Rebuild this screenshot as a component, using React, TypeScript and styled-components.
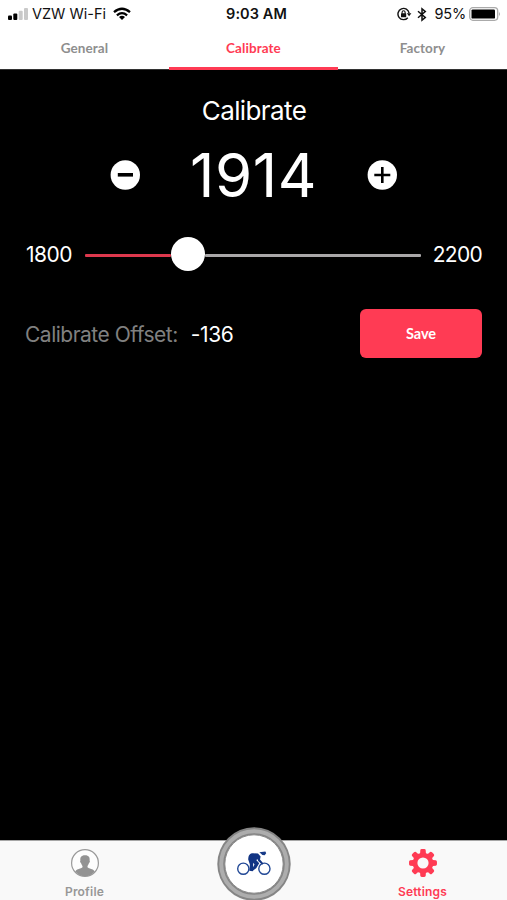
import React from "react";
import styled, { createGlobalStyle } from "styled-components";

const RED = "#ff3b54";

const GlobalStyle = createGlobalStyle`
  * { box-sizing: border-box; }
  html, body { margin: 0; padding: 0; background: #000; }
  body { font-family: Inter, "Liberation Sans", sans-serif; overflow: hidden; }
  button { border: 0; padding: 0; margin: 0; background: none; font: inherit; }
`;

const Screen = styled.div`
  width: 507px;
  height: 900px;
  display: flex;
  flex-direction: column;
  background: #000;
  overflow: hidden;
`;

const StatusBar = styled.header`
  height: 28px;
  flex: none;
  display: grid;
  grid-template-columns: 1fr auto 1fr;
  align-items: center;
  padding: 0 6px 0 8px;
  background: #fff;
  color: #111;
  font-size: 15px;
  line-height: 28px;
`;

const StatusGroup = styled.div<{ $end?: boolean }>`
  display: flex;
  align-items: center;
  justify-content: ${(p) => (p.$end ? "flex-end" : "flex-start")};
  svg { flex: none; display: block; }
`;

const Carrier = styled.span`
  margin: 0 7px 0 4px;
  font-size: 14.5px;
  white-space: nowrap;
`;

const Clock = styled.span`
  font-weight: 600;
  font-size: 14.5px;
  letter-spacing: 0.1px;
  margin-left: 4px;
`;

const Percent = styled.span`
  margin: 0 3px 0 8px;
  font-size: 14.5px;
  letter-spacing: -0.2px;
`;

const Indicators = styled.div`
  display: flex;
  align-items: center;
  gap: 5px;
`;

const Tabs = styled.nav`
  height: 42px;
  flex: none;
  display: grid;
  grid-template-columns: repeat(3, 1fr);
  background: #fff;
  border-bottom: 1px solid #333;
`;

const Tab = styled.button<{ $active?: boolean }>`
  padding-top: 1px;
  font-family: Lato, sans-serif;
  font-weight: 700;
  font-size: 13.5px;
  letter-spacing: 0.08px;
  line-height: 38px;
  color: ${(p) => (p.$active ? RED : "#8e8e8e")};
  border-bottom: 3px solid ${(p) => (p.$active ? RED : "transparent")};
`;

const Content = styled.main`
  flex: 1;
  padding: 0 25px;
  color: #fff;
`;

const Title = styled.h1`
  margin: 25px 0 0;
  padding-left: 1px;
  font-size: 26px;
  letter-spacing: -0.6px;
  line-height: 32px;
  font-weight: 400;
  text-align: center;
`;

const Stepper = styled.div`
  height: 64px;
  margin-top: 16px;
  padding: 0 85px;
  display: flex;
  align-items: center;
  justify-content: space-between;
`;

const StepButton = styled.button`
  width: 30px;
  height: 30px;
  svg { display: block; }
`;

const Value = styled.output`
  font-size: 60px;
  line-height: 64px;
  font-weight: 400;
  letter-spacing: 0.6px;
`;

const SliderRow = styled.div`
  height: 34px;
  margin-top: 30px;
  display: flex;
  align-items: center;
  font-size: 21px;
`;

const Bound = styled.span<{ $end?: boolean }>`
  width: 60px;
  flex: none;
  padding: ${(p) => (p.$end ? "1px 0 0" : "1px 0 0 1px")};
  letter-spacing: ${(p) => (p.$end ? "-0.7px" : "-0.5px")};
  text-align: ${(p) => (p.$end ? "right" : "left")};
`;

const Track = styled.div`
  flex: 1;
  height: 34px;
  margin-right: 1px;
  display: flex;
  align-items: center;
`;

const TrackPart = styled.div<{ $filled?: boolean }>`
  height: 3px;
  margin-top: 2px;
  flex: ${(p) => (p.$filled ? "0 0 86px" : "1")};
  background: ${(p) => (p.$filled ? "#dd384d" : "#a9a7a8")};
  border-radius: 1px;
`;

const Thumb = styled.div`
  width: 34px;
  height: 34px;
  flex: none;
  border-radius: 50%;
  background: #fff;
`;

const OffsetRow = styled.div`
  height: 49px;
  margin-top: 38px;
  display: flex;
  align-items: center;
  font-size: 21px;
`;

const OffsetLabel = styled.span`
  padding-top: 1px;
  color: #808080;
  letter-spacing: -0.5px;
  white-space: nowrap;
`;

const OffsetValue = styled.span`
  padding-top: 1px;
  margin-left: 13px;
  letter-spacing: -0.4px;
`;

const SaveButton = styled.button`
  margin-left: auto;
  width: 122px;
  height: 49px;
  border-radius: 6px;
  background: ${RED};
  color: #fff;
  font-family: Lato, sans-serif;
  font-weight: 700;
  font-size: 14.5px;
`;

const TabBar = styled.footer`
  height: 60px;
  flex: none;
  display: grid;
  grid-template-columns: repeat(3, 1fr);
  background: #f9f9f9;
  border-top: 1px solid #a6a6a6;
`;

const NavItem = styled.button<{ $active?: boolean }>`
  display: flex;
  flex-direction: column;
  align-items: center;
  justify-content: flex-start;
  padding-top: 7px;
  color: ${(p) => (p.$active ? RED : "#979797")};
  svg { display: block; }
`;

const NavLabel = styled.span`
  margin-top: 6px;
  font-size: 12px;
  line-height: 16px;
  font-weight: 600;
  letter-spacing: 0.2px;
`;

const RideButton = styled.button`
  justify-self: center;
  width: 74px;
  height: 74px;
  margin-top: -14px;
  svg { display: block; }
`;

const gearPath = (() => {
  const cmds: string[] = [];
  const pt = (r: number, deg: number) => {
    const a = (deg * Math.PI) / 180;
    return `${(15 + r * Math.sin(a)).toFixed(2)} ${(15 - r * Math.cos(a)).toFixed(2)}`;
  };
  for (let i = 0; i < 8; i++) {
    const c = i * 45;
    cmds.push(`${i ? "L" : "M"}${pt(10.5, c - 16)}`);
    cmds.push(`L${pt(13, c - 12)}`);
    cmds.push(`Q${pt(14.1, c - 11)} ${pt(14, c - 5)}`);
    cmds.push(`L${pt(14, c + 5)}`);
    cmds.push(`Q${pt(14.1, c + 11)} ${pt(13, c + 12)}`);
    cmds.push(`L${pt(10.5, c + 16)}`);
    cmds.push(`Q${pt(9.9, c + 22.5)} ${pt(10.5, c + 29)}`);
  }
  return cmds.join("") + "ZM15 9.4a5.6 5.6 0 1 0 0 11.2a5.6 5.6 0 1 0 0-11.2Z";
})();

const SignalIcon = () => (
  <svg width="20" height="14" viewBox="0 0 20 14">
    <rect x="0" y="8.5" width="4" height="4.5" rx="1" fill="#000" />
    <rect x="5.3" y="6.5" width="4" height="6.5" rx="1" fill="#000" />
    <rect x="10.7" y="3.8" width="4" height="9.2" rx="1" fill="#c9c9c9" />
    <rect x="16" y="1" width="4" height="12" rx="1" fill="#c9c9c9" />
  </svg>
);

const WifiIcon = () => (
  <svg width="18" height="14" viewBox="0 0 18 14" fill="none" stroke="#000" strokeWidth="2.3">
    <path d="M1 5.2Q9-1.7 17 5.2" />
    <path d="M3.9 8.3Q9 4 14.1 8.3" />
    <path d="M9 13L6 10.1Q9 7.6 12 10.1Z" fill="#000" stroke="none" />
  </svg>
);

const RotationLockIcon = () => (
  <svg width="15" height="14" viewBox="0 0 15 14" fill="none" stroke="#111">
    <path d="M10.8 10.7A5.6 5.6 0 1 1 12.1 6.2" strokeWidth="1.4" />
    <path d="M9.8 6.2H14.4L12.1 9.3Z" fill="#111" stroke="none" />
    <rect x="4" y="6.3" width="5.2" height="4" rx=".5" fill="#111" stroke="none" />
    <path d="M5.1 6.7V5.3a1.5 1.5 0 0 1 3 0V6.7" strokeWidth="1.1" />
  </svg>
);

const BluetoothIcon = () => (
  <svg width="10" height="15" viewBox="0 0 10 15" fill="none" stroke="#111" strokeWidth="1.5">
    <path d="M1 4.2L8.3 10.4L5 13.2V1.8L8.3 4.6L1 10.8" />
  </svg>
);

const BatteryIcon = () => (
  <svg width="32" height="14" viewBox="0 0 32 14">
    <rect x=".7" y=".7" width="28" height="12.6" rx="3.2" fill="#fff" stroke="#aaa" strokeWidth="1.3" />
    <rect x="2.5" y="2.4" width="23.5" height="9.2" rx="1.2" fill="#000" />
    <path d="M30.2 4.7Q32 7 30.2 9.3Z" fill="#999" />
  </svg>
);

const StepIcon = ({ plus }: { plus?: boolean }) => (
  <svg width="30" height="30" viewBox="0 0 30 30">
    <circle cx="15.3" cy="15" r="14.7" fill="#fff" />
    <path d={plus ? "M7.3 15H23.3M15.3 7V23" : "M7.8 14.8H23"} stroke="#000" strokeWidth={plus ? 2.6 : 3.6} />
  </svg>
);

const ProfileIcon = () => (
  <svg width="30" height="30" viewBox="0 0 30 30">
    <circle cx="15" cy="15" r="13.4" fill="#fdfdfd" stroke="#999" strokeWidth="1.2" />
    <path
      d="M15 7.2C11 7.2 10 9.6 10.4 12.6C9.8 12.8 10.1 14.7 11 15C11.4 16.6 12.1 17.4 12.5 17.9V19.2C11 20.8 7 20.6 5.2 23.4C10.4 29.8 19.6 29.8 24.8 23.4C23 20.6 19 20.8 17.5 19.2V17.9C17.9 17.4 18.6 16.6 19 15C19.9 14.7 20.2 12.8 19.6 12.6C20 9.6 19 7.2 15 7.2Z"
      fill="#929292"
    />
  </svg>
);

const GearIcon = () => (
  <svg width="30" height="30" viewBox="0 0 30 30">
    <path d={gearPath} fill={RED} fillRule="evenodd" />
  </svg>
);

const RideIcon = () => (
  <svg width="74" height="74" viewBox="0 0 74 74">
    <circle cx="37" cy="37" r="36.7" fill="#858585" />
    <circle cx="37" cy="37" r="32.8" fill="none" stroke="#adadad" strokeWidth="4" />
    <circle cx="37" cy="37" r="29.2" fill="#fff" stroke="#8a8a8a" strokeWidth="1" />
    <g fill="none" stroke="#204795" strokeWidth="1.4">
      <circle cx="26.3" cy="41.7" r="5.6" />
      <circle cx="47.4" cy="41.7" r="5.6" />
    </g>
    <path
      d="M31.2 32.5C31.4 27.8 32.9 26.3 36.2 26.2L41 26.6L43.6 29.5L43 32.6L46.4 36.4L45.3 37.8L41.2 34L40.7 32.3L39.2 33L42.2 36.2L39.2 41.2L36.5 43.2L35.6 44.2L32.3 43.8L32.9 37.6Z"
      fill="#113484"
    />
    <path d="M36.2 35.7L37.5 37.5L36 40.2Z" fill="#fff" />
    <path d="M42.4 25.2L48.4 24.6L49.2 26.2L47.7 28.3L45.4 28.1Z" fill="#173b88" />
  </svg>
);

export default function App() {
  return (
    <>
      <GlobalStyle />
      <Screen>
        <StatusBar>
          <StatusGroup>
            <SignalIcon />
            <Carrier>VZW Wi-Fi</Carrier>
            <WifiIcon />
          </StatusGroup>
          <Clock>9:03 AM</Clock>
          <StatusGroup $end>
            <Indicators>
              <RotationLockIcon />
              <BluetoothIcon />
            </Indicators>
            <Percent>95%</Percent>
            <BatteryIcon />
          </StatusGroup>
        </StatusBar>
        <Tabs>
          <Tab>General</Tab>
          <Tab $active>Calibrate</Tab>
          <Tab>Factory</Tab>
        </Tabs>
        <Content>
          <Title>Calibrate</Title>
          <Stepper>
            <StepButton aria-label="Decrease"><StepIcon /></StepButton>
            <Value>1914</Value>
            <StepButton aria-label="Increase"><StepIcon plus /></StepButton>
          </Stepper>
          <SliderRow>
            <Bound>1800</Bound>
            <Track>
              <TrackPart $filled />
              <Thumb />
              <TrackPart />
            </Track>
            <Bound $end>2200</Bound>
          </SliderRow>
          <OffsetRow>
            <OffsetLabel>Calibrate Offset:</OffsetLabel>
            <OffsetValue>-136</OffsetValue>
            <SaveButton>Save</SaveButton>
          </OffsetRow>
        </Content>
        <TabBar>
          <NavItem>
            <ProfileIcon />
            <NavLabel>Profile</NavLabel>
          </NavItem>
          <RideButton aria-label="Ride"><RideIcon /></RideButton>
          <NavItem $active>
            <GearIcon />
            <NavLabel>Settings</NavLabel>
          </NavItem>
        </TabBar>
      </Screen>
    </>
  );
}
